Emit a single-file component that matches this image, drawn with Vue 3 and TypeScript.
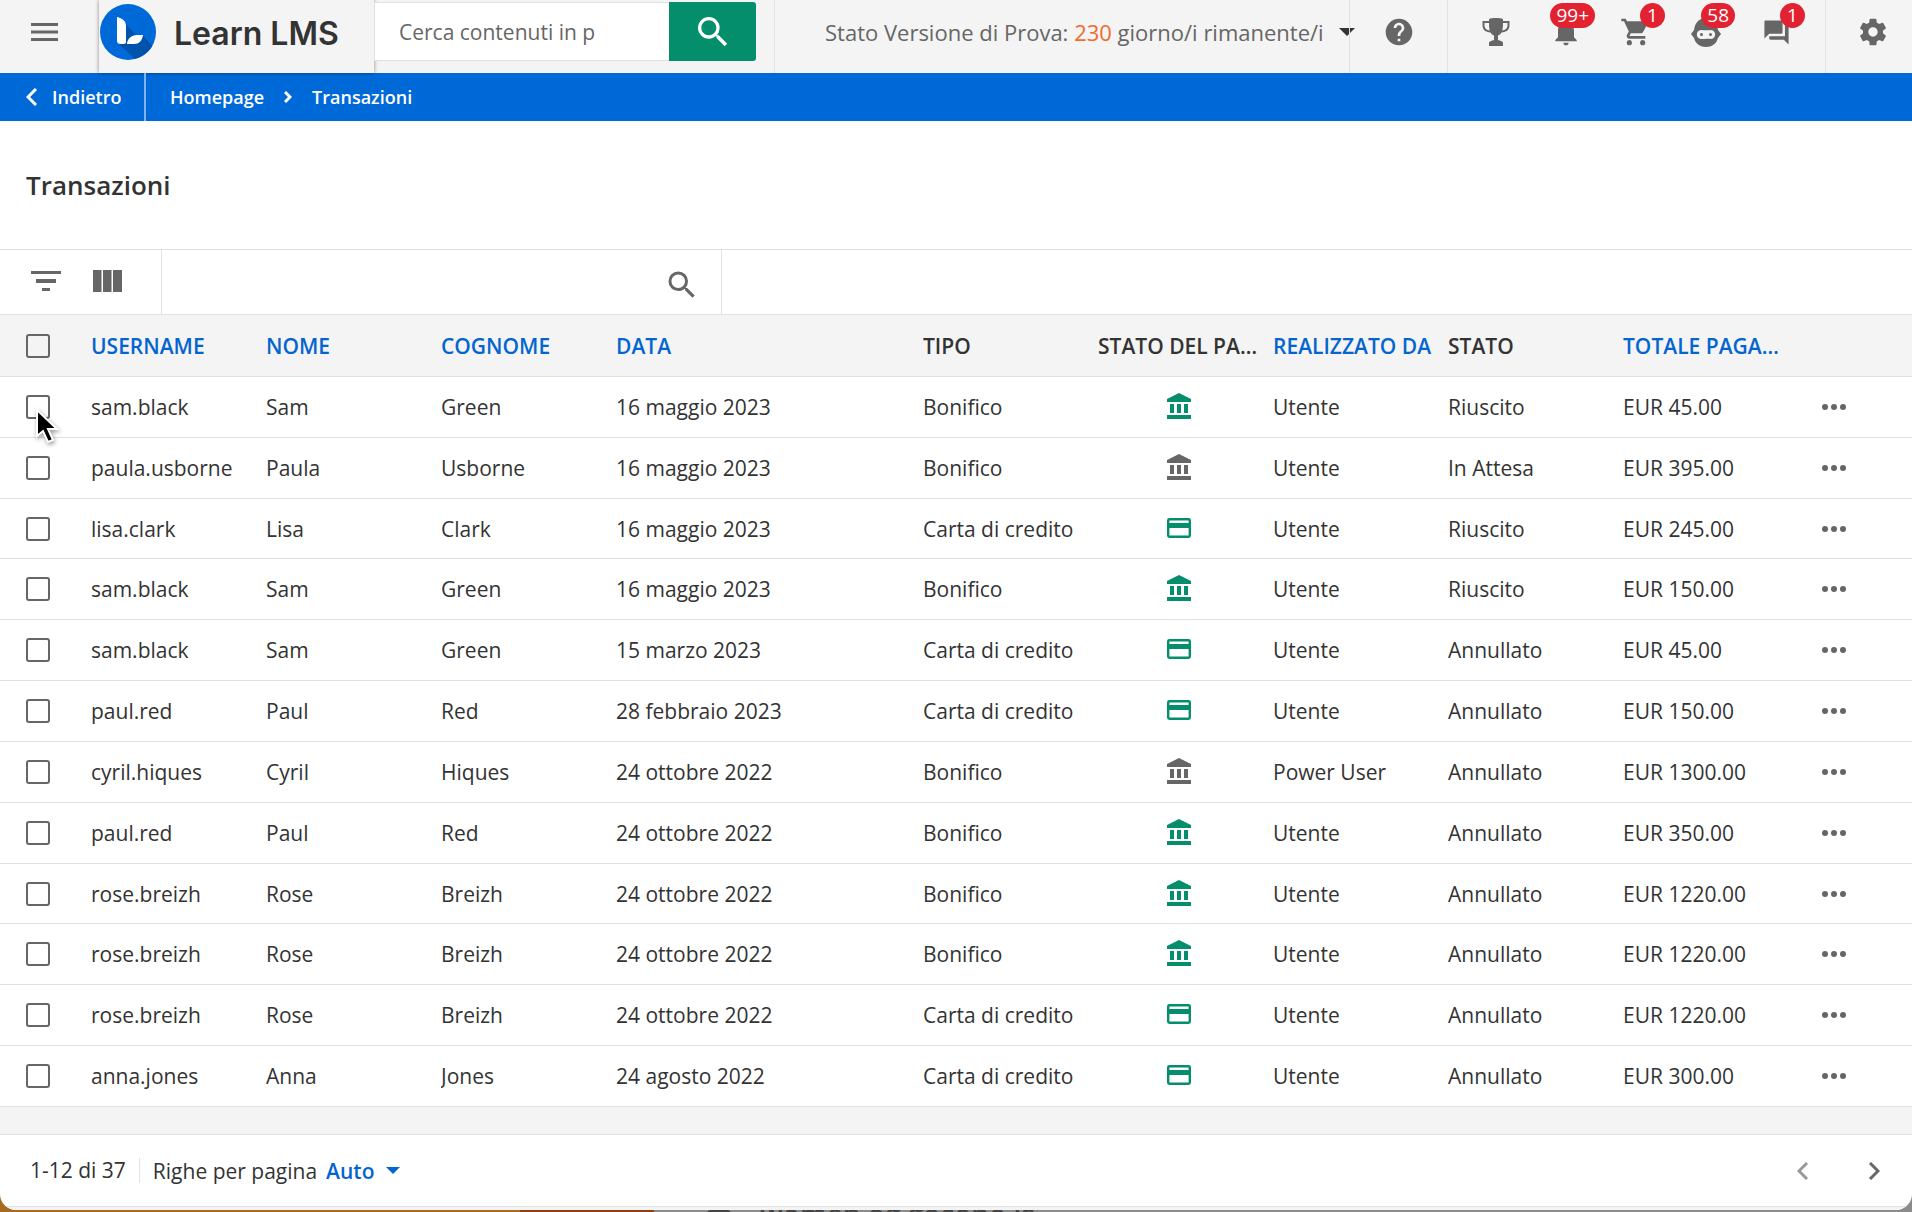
<script setup lang="ts">
import { ref } from 'vue'

interface Column {
  key: string
  label: string
  sortable: boolean
}

interface Transaction {
  username: string
  firstName: string
  lastName: string
  date: string
  type: 'Bonifico' | 'Carta di credito'
  paid: boolean
  madeBy: string
  status: string
  total: string
}

const columns: Column[] = [
  { key: 'username', label: 'USERNAME', sortable: true },
  { key: 'nome', label: 'NOME', sortable: true },
  { key: 'cognome', label: 'COGNOME', sortable: true },
  { key: 'data', label: 'DATA', sortable: true },
  { key: 'tipo', label: 'TIPO', sortable: false },
  { key: 'pagamento', label: 'STATO DEL PAGAMENTO', sortable: false },
  { key: 'realizzato', label: 'REALIZZATO DA', sortable: true },
  { key: 'stato', label: 'STATO', sortable: false },
  { key: 'totale', label: 'TOTALE PAGAMENTO', sortable: true },
]

function tx(
  username: string, firstName: string, lastName: string, date: string,
  type: Transaction['type'], paid: boolean, madeBy: string, status: string, total: string,
): Transaction {
  return { username, firstName, lastName, date, type, paid, madeBy, status, total }
}

const rows: Transaction[] = [
  tx('sam.black', 'Sam', 'Green', '16 maggio 2023', 'Bonifico', true, 'Utente', 'Riuscito', 'EUR 45.00'),
  tx('paula.usborne', 'Paula', 'Usborne', '16 maggio 2023', 'Bonifico', false, 'Utente', 'In Attesa', 'EUR 395.00'),
  tx('lisa.clark', 'Lisa', 'Clark', '16 maggio 2023', 'Carta di credito', true, 'Utente', 'Riuscito', 'EUR 245.00'),
  tx('sam.black', 'Sam', 'Green', '16 maggio 2023', 'Bonifico', true, 'Utente', 'Riuscito', 'EUR 150.00'),
  tx('sam.black', 'Sam', 'Green', '15 marzo 2023', 'Carta di credito', true, 'Utente', 'Annullato', 'EUR 45.00'),
  tx('paul.red', 'Paul', 'Red', '28 febbraio 2023', 'Carta di credito', true, 'Utente', 'Annullato', 'EUR 150.00'),
  tx('cyril.hiques', 'Cyril', 'Hiques', '24 ottobre 2022', 'Bonifico', false, 'Power User', 'Annullato', 'EUR 1300.00'),
  tx('paul.red', 'Paul', 'Red', '24 ottobre 2022', 'Bonifico', true, 'Utente', 'Annullato', 'EUR 350.00'),
  tx('rose.breizh', 'Rose', 'Breizh', '24 ottobre 2022', 'Bonifico', true, 'Utente', 'Annullato', 'EUR 1220.00'),
  tx('rose.breizh', 'Rose', 'Breizh', '24 ottobre 2022', 'Bonifico', true, 'Utente', 'Annullato', 'EUR 1220.00'),
  tx('rose.breizh', 'Rose', 'Breizh', '24 ottobre 2022', 'Carta di credito', true, 'Utente', 'Annullato', 'EUR 1220.00'),
  tx('anna.jones', 'Anna', 'Jones', '24 agosto 2022', 'Carta di credito', true, 'Utente', 'Annullato', 'EUR 300.00'),
]

const selected = ref<number[]>([])
const gridQuery = ref('')

function toggleAll(event: Event) {
  const on = (event.target as HTMLInputElement).checked
  selected.value = on ? rows.map((_, i) => i) : []
}
</script>

<template>
  <div class="app">
    <header class="topbar">
      <button class="icon-btn menu" aria-label="Menu">
        <svg width="27" height="18" viewBox="0 0 27 18"><path d="M0 0h27v3H0zM0 7.500h27v3H0zM0 15h27v3H0z" /></svg>
      </button>
      <a class="brand" href="#">
        <svg class="brand-mark" width="56" height="56" viewBox="0 0 56 56">
          <defs><clipPath id="disc"><circle cx="28" cy="28" r="28" /></clipPath></defs>
          <circle cx="28" cy="28" r="28" fill="#0069d8" />
          <path clip-path="url(#disc)" d="M25 19L36 31H42L56 45V56H36L19 40z" fill="#0053ac" />
          <path d="M17 13c5 1 9 4 9 9v16c0 1-1 2-2 2h-3c-3 0-4-1-4-4z" fill="#fff" />
          <path d="M27 40v-1c1-5 5-8 10-8h6c-1 6-4 9-9 9z" fill="#fff" />
        </svg>
        <span class="brand-name">Learn LMS</span>
      </a>
      <form class="search" @submit.prevent>
        <input type="text" placeholder="Cerca contenuti in p" aria-label="Cerca contenuti" />
        <button aria-label="Cerca">
          <svg width="40" height="40" viewBox="0 0 24 24"><path d="M15.500 14h-.79l-.28-.27A6.470 6.470 0 0 0 16 9.500 6.500 6.500 0 1 0 9.500 16c1.610 0 3.090-.59 4.230-1.570l.27.28v.79l5 4.990L20.490 19l-4.990-5zm-6 0C7.010 14 5 11.990 5 9.500S7.010 5 9.500 5 14 7.010 14 9.500 11.990 14 9.500 14z" /></svg>
        </button>
      </form>
      <button class="trial">
        <span>Stato Versione di Prova: <b>230</b> giorno/i rimanente/i</span>
        <svg width="16" height="8" viewBox="0 0 16 8"><path d="M0 0h16L8 8z" /></svg>
      </button>
      <div class="help">
        <button class="icon-btn" aria-label="Aiuto">
          <svg width="32" height="32" viewBox="0 0 24 24"><path d="M12 2C6.480 2 2 6.480 2 12s4.480 10 10 10 10-4.480 10-10S17.520 2 12 2zm1 17h-2v-2h2v2zm2.070-7.750l-.9.920C13.450 12.900 13 13.500 13 15h-2v-.5c0-1.100.45-2.100 1.170-2.830l1.240-1.260c.37-.36.59-.86.59-1.410 0-1.100-.9-2-2-2s-2 .9-2 2H8c0-2.210 1.790-4 4-4s4 1.790 4 4c0 .88-.36 1.680-.93 2.250z" /></svg>
        </button>
      </div>
      <nav class="tools">
        <button class="icon-btn" aria-label="Gamification">
          <svg width="32" height="32" viewBox="0 0 32 32"><path fill-rule="evenodd" d="M9 3.500C9 2.500 12 2 16 2s7 .5 7 1.500V5h6.500v4c0 5-3 7-8 7.500-1 1.500-2 2.500-3.500 3V24c2 1 5 1 5 3v3H9v-3c0-2 3-2 5-3v-4.500c-1.500-.5-2.500-1.500-3.500-3C5.500 16 2.500 14 2.500 9V5H9zM4.500 7v2c0 3.500 2.200 5 5.300 5.500C9.200 12.500 9 10 9 7zM23 7c0 3-.2 5.500-.8 7.500 3-.5 5.300-2 5.300-5.500V7z" /></svg>
        </button>
        <button class="icon-btn" aria-label="Notifiche">
          <svg width="32" height="32" viewBox="0 0 24 24"><path d="M12 22c1.100 0 2-.9 2-2h-4c0 1.100.9 2 2 2zm6-6v-5c0-3.070-1.640-5.640-4.500-6.320V4c0-.83-.67-1.500-1.500-1.500s-1.500.67-1.500 1.500v.68C7.630 5.360 6 7.920 6 11v5l-2 2v1h16v-1l-2-2z" /></svg>
          <span class="badge">99+</span>
        </button>
        <button class="icon-btn" aria-label="Carrello">
          <svg width="32" height="32" viewBox="0 0 24 24"><path d="M7 18c-1.100 0-1.990.9-1.990 2S5.900 22 7 22s2-.9 2-2-.9-2-2-2zM1 2v2h2l3.600 7.590-1.350 2.450c-.16.28-.25.61-.25.960 0 1.100.9 2 2 2h12v-2H7.420c-.14 0-.25-.11-.25-.25l.03-.12.9-1.630h7.450c.75 0 1.410-.41 1.750-1.030l3.580-6.490A1 1 0 0 0 20 4H5.210l-.94-2H1zm16 16c-1.100 0-1.990.9-1.990 2s.89 2 1.990 2 2-.9 2-2-.9-2-2-2z" /></svg>
          <span class="badge">1</span>
        </button>
        <button class="icon-btn" aria-label="Assistente">
          <svg width="32" height="32" viewBox="0 0 32 32"><path fill-rule="evenodd" d="M16 2c6 0 11 4 12 12l3 4-3 4c-1.500 6-6.500 9-12 9S5.500 28 4 22l-3-4 3-4C5 6 10 2 16 2zM11 14c-5.500 0-5.500 9 0 9 3 0 7-.8 10 0 5.500 0 5.500-9 0-9-3 .8-7 0-10 0z" /><circle cx="11.500" cy="18.500" r="1.500" /><circle cx="20.500" cy="18.500" r="1.500" /></svg>
          <span class="badge">58</span>
        </button>
        <button class="icon-btn" aria-label="Messaggi">
          <svg width="29" height="29" viewBox="0 0 24 24"><path d="M21 6h-2v9H6v2c0 .55.45 1 1 1h11l4 4V7c0-.55-.45-1-1-1zm-4 6V3c0-.55-.45-1-1-1H3c-.55 0-1 .45-1 1v14l4-4h10c.55 0 1-.45 1-1z" /></svg>
          <span class="badge">1</span>
        </button>
      </nav>
      <div class="settings">
        <button class="icon-btn" aria-label="Impostazioni">
          <svg width="32" height="32" viewBox="0 0 24 24"><path d="M19.430 12.980c.04-.32.07-.64.07-.98s-.03-.66-.07-.98l2.110-1.650c.19-.15.24-.42.12-.64l-2-3.460c-.12-.22-.39-.3-.61-.22l-2.490 1c-.52-.4-1.080-.73-1.690-.98l-.38-2.650A.49.49 0 0 0 14 2h-4c-.25 0-.46.18-.49.42l-.38 2.650c-.61.25-1.170.59-1.690.98l-2.490-1c-.23-.09-.49 0-.61.22l-2 3.460c-.13.22-.07.49.12.64l2.110 1.650c-.04.32-.07.650-.07.98s.03.660.07.980l-2.110 1.650c-.19.15-.24.42-.12.64l2 3.460c.12.22.39.3.61.22l2.490-1c.52.4 1.080.73 1.690.98l.38 2.650c.03.24.24.42.49.42h4c.25 0 .46-.18.49-.42l.38-2.650c.61-.25 1.170-.59 1.690-.98l2.490 1c.23.09.49 0 .61-.22l2-3.460c.12-.22.07-.49-.12-.64l-2.110-1.650zM12 15.500c-1.930 0-3.500-1.570-3.500-3.500s1.570-3.500 3.500-3.500 3.500 1.570 3.500 3.500-1.570 3.500-3.500 3.500z" /></svg>
        </button>
      </div>
    </header>

    <nav class="crumbs">
      <a class="back" href="#">
        <svg width="12" height="18" viewBox="0 0 12 18"><path d="M10 1L2 9l8 8" /></svg>
        Indietro
      </a>
      <a href="#">Homepage</a>
      <svg class="sep" width="8" height="12" viewBox="0 0 8 12"><path d="M1 1l5 5-5 5" /></svg>
      <a href="#">Transazioni</a>
    </nav>

    <main>
      <h1>Transazioni</h1>

      <div class="toolbar">
        <div class="actions">
          <button class="icon-btn" aria-label="Filtri">
            <svg width="30" height="20" viewBox="0 0 30 20"><path d="M0 0h30v3H0zM5 8h20v4H5zM11 17h8v3h-8z" /></svg>
          </button>
          <button class="icon-btn" aria-label="Colonne">
            <svg width="29" height="22" viewBox="0 0 29 22"><path d="M0 0h8.500v22H0zM10 0h8.500v22H10zM20 0h9v22h-9z" /></svg>
          </button>
        </div>
        <label class="grid-search">
          <input v-model="gridQuery" type="text" aria-label="Cerca transazioni" />
          <svg width="36" height="36" viewBox="0 0 24 24"><path d="M15.500 14h-.79l-.28-.27A6.470 6.470 0 0 0 16 9.500 6.500 6.500 0 1 0 9.500 16c1.610 0 3.090-.59 4.230-1.570l.27.28v.79l5 4.990L20.490 19l-4.990-5zm-6 0C7.010 14 5 11.990 5 9.500S7.010 5 9.500 5 14 7.010 14 9.500 11.990 14 9.500 14z" /></svg>
        </label>
      </div>

      <table>
        <colgroup>
          <col class="w-check" />
          <col class="w-col" /><col class="w-col" /><col class="w-col" />
          <col />
          <col class="w-col" /><col class="w-col" /><col class="w-col" /><col class="w-col" /><col class="w-col" />
          <col class="w-more" />
        </colgroup>
        <thead>
          <tr>
            <th class="check">
              <input type="checkbox" aria-label="Seleziona tutto" :checked="selected.length === rows.length" @change="toggleAll" />
            </th>
            <th v-for="c in columns" :key="c.key" scope="col" :class="{ sortable: c.sortable }">{{ c.label }}</th>
            <th></th>
          </tr>
        </thead>
        <tbody>
          <tr v-for="(r, i) in rows" :key="i">
            <td class="check">
              <input v-model="selected" type="checkbox" :value="i" :aria-label="'Seleziona ' + r.username" />
              <svg v-if="i === 0" class="pointer" width="24" height="38" viewBox="0 0 24 38"><path d="M2 2v26l6-5 5 11 5-2-5-11h9z" /></svg>
            </td>
            <td>{{ r.username }}</td>
            <td>{{ r.firstName }}</td>
            <td>{{ r.lastName }}</td>
            <td>{{ r.date }}</td>
            <td>{{ r.type }}</td>
            <td class="pay" :class="{ paid: r.paid }">
              <svg v-if="r.type === 'Bonifico'" width="24" height="26" viewBox="0 0 24 26"><path d="M12 0l12 6v3H0V6zM3 11h4v9H3zM10 11h4v9h-4zM17 11h4v9h-4zM0 22h24v4H0z" /></svg>
              <svg v-else width="24" height="20" viewBox="0 0 24 20"><path fill-rule="evenodd" d="M2.400 0h19.200A2.400 2.400 0 0 1 24 2.400v15.200a2.400 2.400 0 0 1-2.400 2.400H2.400A2.400 2.400 0 0 1 0 17.600V2.400A2.400 2.400 0 0 1 2.400 0zM2.400 2.500V5h19.200V2.500zM2.400 10v7.500h19.200V10z" /></svg>
            </td>
            <td>{{ r.madeBy }}</td>
            <td>{{ r.status }}</td>
            <td>{{ r.total }}</td>
            <td class="more">
              <button class="icon-btn" aria-label="Altre azioni">
                <svg width="24" height="6" viewBox="0 0 24 6"><circle cx="3" cy="3" r="3" /><circle cx="12" cy="3" r="3" /><circle cx="21" cy="3" r="3" /></svg>
              </button>
            </td>
          </tr>
        </tbody>
      </table>
      <div class="band"></div>
    </main>

    <footer class="pager">
      <span class="count">1-12 di 37</span>
      <label for="page-size">Righe per pagina</label>
      <span class="size">
        <select id="page-size"><option>Auto</option><option>25</option><option>50</option></select>
        <svg width="14" height="7" viewBox="0 0 14 7"><path d="M0 0h14L7 7z" /></svg>
      </span>
      <span class="pages">
        <button class="icon-btn" disabled aria-label="Pagina precedente">
          <svg width="12" height="18" viewBox="0 0 12 18"><path d="M10 1L2 9l8 8" /></svg>
        </button>
        <button class="icon-btn" aria-label="Pagina successiva">
          <svg width="12" height="18" viewBox="0 0 12 18"><path d="M2 1l8 8-8 8" /></svg>
        </button>
      </span>
    </footer>
    <div class="window-edge"></div>
  </div>
  <div class="desktop">
    <span class="desktop-icon"></span>
    <span>women og gocono is</span>
  </div>
</template>

<style>
body {
  background: linear-gradient(90deg, #a86a20 0 520px, #8f3f12 520px 654px, #8b8b8b 654px);
  overflow: hidden;
}
</style>

<style scoped>
.app {
  font-family: "Open Sans", "Noto Sans", sans-serif;
  font-size: 21px;
  color: #333;
  background: #fff;
  border-radius: 0 0 16px 16px;
  overflow: hidden;
}

button,
input,
select {
  font: inherit;
  color: inherit;
  margin: 0;
  padding: 0;
  border: 0;
  background: none;
}

a {
  color: inherit;
  text-decoration: none;
}

svg {
  display: block;
  flex: none;
}

.icon-btn {
  display: flex;
  align-items: center;
  justify-content: center;
  position: relative;
  color: #666;
}

.icon-btn svg {
  fill: currentColor;
}

.topbar {
  display: flex;
  height: 73px;
  background: #f4f4f4;
}

.menu {
  width: 99px;
  height: 64px;
  padding-right: 10px;
}

.brand {
  display: flex;
  align-items: center;
  gap: 18px;
  box-sizing: border-box;
  width: 275px;
  height: 73px;
  padding: 0 0 9px 1px;
  box-shadow: 0 0 4px rgba(0, 0, 0, 0.45);
}

.brand-name {
  padding-top: 4px;
  font-family: Inter, "Open Sans", sans-serif;
  font-size: 32px;
  font-weight: 600;
  line-height: 40px;
}

.search {
  display: flex;
  height: 59px;
  width: 382px;
  margin-top: 2px;
}

.search input {
  flex: 1;
  min-width: 0;
  padding-left: 24px;
  border: 1px solid #e1e1e1;
  border-right: 0;
  background: #fff;
  color: #666;
}

.search input::placeholder {
  color: #666;
  opacity: 1;
}

.search button {
  display: flex;
  align-items: center;
  justify-content: center;
  width: 87px;
  border-radius: 0 3px 3px 0;
  background: #048e6c;
}

.search button svg {
  fill: #fff;
}

.trial {
  display: flex;
  align-items: center;
  justify-content: space-between;
  box-sizing: border-box;
  width: 575px;
  margin-left: auto;
  height: 73px;
  padding-left: 50px;
  padding-bottom: 9px;
  border-left: 1px solid #e1e1e1;
  font-size: 22px;
  color: #666;
  white-space: nowrap;
}

.trial b {
  font-weight: 400;
  color: #ee6c2c;
}

.trial svg {
  fill: #333;
  margin-right: -6px;
}

.help,
.tools,
.settings {
  display: flex;
  align-items: center;
  box-sizing: border-box;
  height: 73px;
  padding-bottom: 9px;
  border-left: 1px solid #e1e1e1;
}

.help {
  width: 98px;
  justify-content: center;
}

.tools {
  width: 378px;
  padding-left: 13px;
}

.tools .icon-btn {
  width: 70px;
  height: 64px;
}

.settings {
  width: 87px;
  padding-left: 8px;
  justify-content: center;
}

.badge {
  position: absolute;
  top: 3px;
  right: 6px;
  min-width: 25px;
  box-sizing: border-box;
  height: 25px;
  padding: 0 6px;
  border-radius: 13px;
  background: #e32231;
  color: #fff;
  font-size: 19px;
  line-height: 25px;
  text-align: center;
}

.crumbs {
  display: flex;
  align-items: center;
  height: 48px;
  background: #0069d8;
  color: #fff;
  font-size: 18px;
  font-weight: 600;
}

.crumbs svg path,
.pages path {
  fill: none;
  stroke: currentColor;
  stroke-width: 3;
}

.back {
  display: flex;
  align-items: center;
  gap: 14px;
  box-sizing: border-box;
  width: 146px;
  height: 48px;
  padding-left: 26px;
  margin-right: 24px;
  border-right: 2px solid #80b4ec;
}

.sep {
  margin: 0 20px;
}

h1 {
  margin: 0;
  padding: 48px 26px;
  font-size: 26px;
  font-weight: 600;
  line-height: 32px;
}

.toolbar {
  display: flex;
  height: 64px;
  border-top: 1px solid #e1e1e1;
  border-bottom: 1px solid #e1e1e1;
}

.actions {
  display: flex;
  gap: 32px;
  box-sizing: border-box;
  width: 162px;
  padding: 0 31px 2px;
  border-right: 1px solid #e1e1e1;
}

.grid-search {
  display: flex;
  align-items: center;
  box-sizing: border-box;
  width: 560px;
  padding: 6px 21px 0 24px;
  border-right: 1px solid #e1e1e1;
}

.grid-search input {
  flex: 1;
  min-width: 0;
}

.grid-search svg {
  fill: #666;
}

table {
  width: 100%;
  table-layout: fixed;
  border-collapse: separate;
  border-spacing: 0;
}

.w-check {
  width: 91px;
}

.w-col {
  width: 175px;
}

.w-more {
  width: 114px;
}

th,
td {
  height: 61px;
  box-sizing: border-box;
  padding: 0 13px 0 0;
  border-bottom: 1px solid #e1e1e1;
  text-align: left;
  white-space: nowrap;
  overflow: hidden;
  text-overflow: ellipsis;
}

th {
  height: 62px;
  background: #f4f4f4;
  font-weight: 600;
}

th.sortable {
  color: #0465d0;
}

tbody tr:nth-child(6n + 3) td {
  height: 60px;
}

.check {
  position: relative;
  padding-left: 26px;
  overflow: visible;
}

.check input {
  display: block;
  appearance: none;
  width: 24px;
  height: 24px;
  border: 2px solid #666;
  border-radius: 3px;
}

.check input:checked {
  background: #0465d0;
}

.pointer {
  position: absolute;
  left: 35px;
  top: 31px;
  z-index: 1;
  fill: #000;
  stroke: #fff;
  stroke-width: 2;
  filter: drop-shadow(1px 2px 2px rgba(0, 0, 0, 0.4));
}

.pay {
  padding-bottom: 2px;
}

.pay svg {
  margin: 0 auto;
  fill: #666;
}

.pay.paid svg {
  fill: #048e6c;
}

.more .icon-btn {
  width: 72px;
  height: 40px;
}

.band {
  height: 27px;
  background: #f4f4f4;
  border-bottom: 1px solid #e1e1e1;
}

.pager {
  display: flex;
  align-items: center;
  height: 71px;
  padding: 0 26px 0 30px;
  border-bottom: 1px solid #e1e1e1;
}

.count {
  padding-right: 13px;
  margin-right: 13px;
  border-right: 1px solid #e1e1e1;
  line-height: 25px;
}

.size {
  display: flex;
  align-items: center;
  gap: 12px;
  margin-left: 9px;
  color: #0465d0;
  font-weight: 600;
}

.size select {
  appearance: none;
  field-sizing: content;
}

.size svg {
  fill: #0465d0;
}

.pages {
  display: flex;
  gap: 46px;
  margin-left: auto;
}

.pages .icon-btn {
  width: 25px;
  height: 32px;
}

.pages .icon-btn:disabled {
  color: #999;
}

.window-edge {
  height: 3px;
  background: #f4f4f4;
}

/* Sliver of the page that shows behind the window. */
.desktop {
  display: flex;
  gap: 29px;
  height: 2px;
  padding-left: 707px;
  overflow: hidden;
  font-family: "Open Sans", "Noto Sans", sans-serif;
  font-size: 28px;
  font-weight: 600;
  line-height: 8px;
  color: #444;
}

.desktop-icon {
  width: 24px;
  height: 8px;
  border-radius: 4px;
  background: #444;
}
</style>
